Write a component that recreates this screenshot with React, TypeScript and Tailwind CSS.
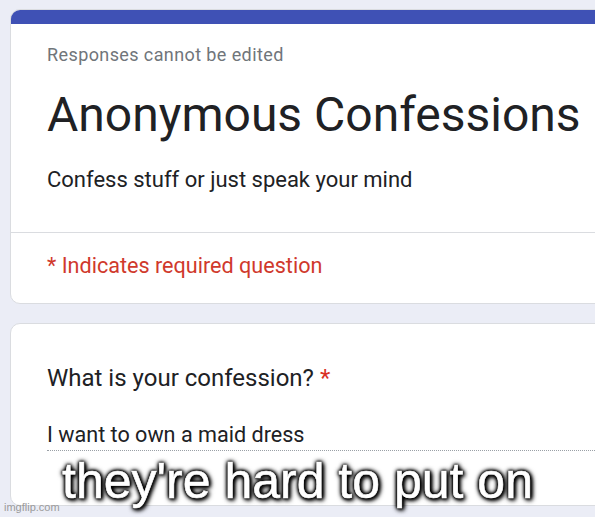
import React from "react";

export default function App() {
  return (
    <div
      className="relative w-[595px] h-[517px] overflow-hidden bg-[#ebedf6]"
      style={{ fontFamily: "Roboto, 'Liberation Sans', sans-serif" }}
    >
      <div className="flex flex-col pl-[10px] pt-[9px] w-[620px]">
        {/* Header card */}
        <div className="flex flex-col overflow-hidden rounded-l-[10px] border border-[#dadce0] bg-white h-[295px]">
          <div className="h-[14px] bg-[#3f51b5] shrink-0" />
          <div className="flex flex-col pl-[36px] pt-[19px] h-[209px] border-b border-[#dadce0]">
            <div className="text-[18px] leading-[24px] tracking-[0.4px] text-[#70757a]">Responses cannot be edited</div>
            <div className="mt-[21px] text-[48px] leading-[54px] text-[#202124]">Anonymous Confessions</div>
            <div className="mt-[24px] text-[22px] leading-[28px] text-[#202124]">Confess stuff or just speak your mind</div>
          </div>
          <div className="flex items-center pl-[36px] h-[66px] text-[21.6px] text-[#d0392c]">
            * Indicates required question
          </div>
        </div>

        {/* Question card */}
        <div className="mt-[19px] flex flex-col rounded-l-[10px] border border-[#dadce0] bg-white h-[183px] pl-[36px]">
          <div className="mt-[39px] text-[24px] leading-[30px] text-[#202124]">
            What is your confession? <span className="text-[#d93025]">*</span>
          </div>
          <div className="mt-[29px] text-[21.6px] leading-[26px] text-[#202124] border-b border-dotted border-[#9aa0a6] pb-[2px]">
            I want to own a maid dress
          </div>
        </div>
      </div>

      {/* Meme caption */}
      <div
        className="absolute left-0 right-0 top-[452px] text-center text-white text-[50px] leading-[58px] [-webkit-text-stroke:0.6px_#fff] [text-shadow:0_0_2px_#000,0_0_3px_#000,0_0_4px_#000,0_0_5px_#000,1px_1px_6px_#000,2px_2px_4px_#000]"
        style={{ fontFamily: "'Liberation Sans', Arial, sans-serif" }}
      >
        they're hard to put on
      </div>
      <div
        className="absolute left-[4px] bottom-[4px] text-[11px] leading-[12px] text-[#9a9a9a]"
        style={{ fontFamily: "'Liberation Sans', Arial, sans-serif" }}
      >
        imgflip.com
      </div>
    </div>
  );
}
